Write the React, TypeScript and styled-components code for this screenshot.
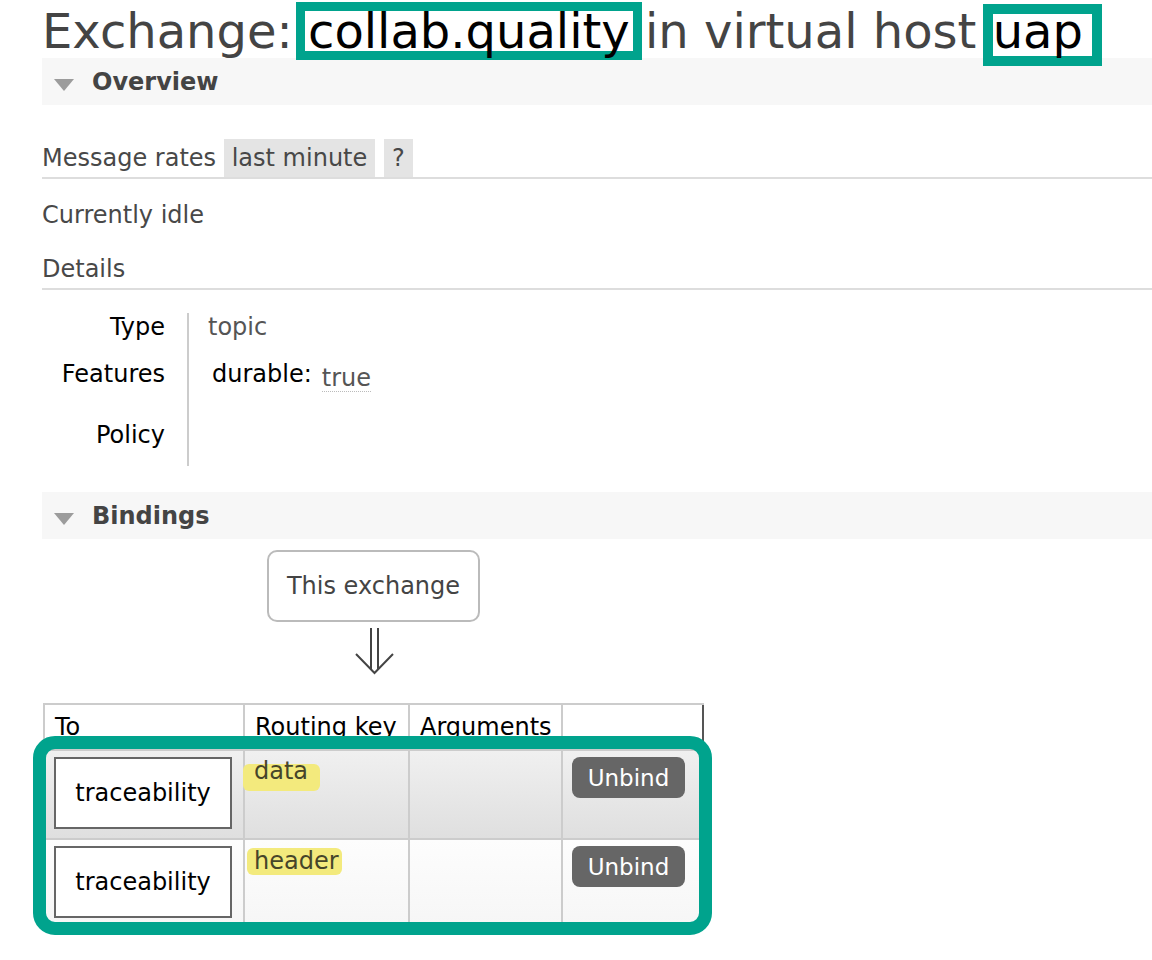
import React from "react";
import styled, { createGlobalStyle } from "styled-components";

const TEAL = "#00a38d";

const GlobalStyle = createGlobalStyle`
  html, body { margin: 0; padding: 0; background: #fff; }
  body {
    font-family: "DejaVu Sans", Verdana, sans-serif;
    font-size: 24px;
    color: #484848;
    overflow: hidden;
  }
`;

const Page = styled.div`
  width: 1152px;
  height: 960px;
  overflow: hidden;
  padding-left: 42px;
  box-sizing: border-box;
`;

const Title = styled.h1`
  margin: 0;
  padding-top: 5px;
  font-size: 48px;
  line-height: 52px;
  font-weight: normal;
  color: #444;
  white-space: nowrap;
`;

const Callout = styled.span<{ $bw: number; $lh: number; $pad: string; $ml: number; $mr: number }>`
  display: inline-block;
  border: ${(p) => p.$bw}px solid ${TEAL};
  background: #fff;
  color: #000;
  line-height: ${(p) => p.$lh}px;
  padding: ${(p) => p.$pad};
  margin: -8px ${(p) => p.$mr}px -8px ${(p) => p.$ml}px;
`;

const SectionHeader = styled.h2<{ $mt: number }>`
  margin: ${(p) => p.$mt}px 0 0;
  height: 47px;
  display: flex;
  align-items: center;
  padding-left: 12px;
  background: #f7f7f7;
  font-size: 24px;
  font-weight: bold;
  color: #444;
`;

const Triangle = styled.span`
  width: 0;
  height: 0;
  border-left: 10.5px solid transparent;
  border-right: 10.5px solid transparent;
  border-top: 12px solid #9c9c9c;
  margin: 6px 18px 0 0;
`;

const SubHeading = styled.h3<{ $mt: number }>`
  margin: ${(p) => p.$mt}px 0 0;
  font-size: 24px;
  font-weight: normal;
  line-height: 38px;
  color: #484848;
  border-bottom: 2px solid #ddd;
  white-space: nowrap;
`;

const Pill = styled.span<{ $ml?: number }>`
  display: inline-block;
  background: #e4e4e4;
  padding: 0 8px;
  margin-left: ${(p) => p.$ml ?? 0}px;
`;

const Idle = styled.p`
  margin: 17px 0 0;
  line-height: 38px;
  color: #484848;
`;

const Facts = styled.div`
  margin-top: 23px;
  display: grid;
  grid-template-columns: 145px auto;
  grid-template-rows: 47px 61px 45px;
  line-height: 28px;
`;

const FactLabel = styled.div`
  text-align: right;
  padding-right: 22px;
  color: #000;
`;

const FactValue = styled.div`
  border-left: 2px solid #ccc;
  padding-left: 19px;
  color: #555;
`;

const FeatureRow = styled.div`
  padding-left: 4px;
  color: #000;
`;

const Dotted = styled.span`
  display: inline-block;
  margin-left: 10px;
  vertical-align: -4px;
  color: #555;
  border-bottom: 1px dotted #bbb;
  line-height: 26px;
`;

const BindingsWrap = styled.div`
  display: inline-flex;
  flex-direction: column;
  align-items: center;
  margin-left: 1px;
`;

const ThisExchange = styled.div`
  margin-top: 11px;
  border: 2px solid #bbb;
  border-radius: 10px;
  padding: 0 18px;
  line-height: 68px;
  color: #444;
  white-space: nowrap;
`;

const ArrowSvg = styled.svg`
  display: block;
  margin-top: 4px;
`;

const TableWrap = styled.div`
  position: relative;
  margin-top: 27px;
`;

const Table = styled.table`
  border-collapse: separate;
  border-spacing: 0;
  table-layout: fixed;
  width: 661px;
  border-top: 2px solid #ccc;
  border-left: 2px solid #ccc;
`;

const Th = styled.th<{ $w: number; $last?: boolean }>`
  width: ${(p) => p.$w}px;
  box-sizing: border-box;
  height: 46px;
  padding: 0 0 0 10px;
  text-align: left;
  font-weight: normal;
  color: #000;
  white-space: nowrap;
  overflow: hidden;
  border-right: 2px solid ${(p) => (p.$last ? "#555" : "#ccc")};
  border-bottom: 2px solid #ccc;
`;

const Td = styled.td<{ $bg: string; $pad: string }>`
  height: 89px;
  box-sizing: border-box;
  vertical-align: top;
  padding: ${(p) => p.$pad};
  background: ${(p) => p.$bg};
  border-right: 2px solid #ccc;
  border-bottom: 2px solid #ccc;
`;

const QueueBox = styled.div`
  width: 178px;
  height: 72px;
  box-sizing: border-box;
  border: 2px solid #666;
  background: #fff;
  color: #000;
  line-height: 68px;
  text-align: center;
`;

const Marker = styled.span<{ $mt: number; $ml: number; $lh: number; $pad: string }>`
  display: inline-block;
  margin: ${(p) => p.$mt}px 0 0 ${(p) => p.$ml}px;
  line-height: ${(p) => p.$lh}px;
  padding: ${(p) => p.$pad};
  background: #f3ea7d;
  border-radius: 6px;
  color: #46452a;
  vertical-align: top;
`;

const UnbindButton = styled.button`
  width: 113px;
  height: 41px;
  border: none;
  border-radius: 8px;
  background: #666;
  color: #fff;
  font-family: "DejaVu Sans", Verdana, sans-serif;
  font-size: 23px;
  padding: 0;
  cursor: pointer;
`;

const Highlight = styled.div`
  position: absolute;
  left: -10px;
  top: 33px;
  width: 679px;
  height: 199px;
  box-sizing: border-box;
  border: 13px solid ${TEAL};
  border-radius: 22px;
  pointer-events: none;
`;

const rows = [
  {
    key: "data",
    bg: "linear-gradient(#f0f0f0, #dfdfdf)",
    mt: 13,
    ml: -2,
    lh: 15,
    pad: "0 12px 12px 11px",
  },
  {
    key: "header",
    bg: "linear-gradient(#fdfdfd, #f6f6f6)",
    mt: 8,
    ml: 2,
    lh: 27,
    pad: "0 3px 0 7px",
  },
];

export default function App() {
  return (
    <>
      <GlobalStyle />
      <Page>
        <Title>
          Exchange:{" "}
          <Callout $bw={9} $lh={40} $pad="0 3px" $ml={-12} $mr={-12}>
            collab.quality
          </Callout>{" "}
          in virtual host{" "}
          <Callout $bw={10} $lh={35} $pad="0 9px 7px 0" $ml={-9} $mr={0}>
            uap
          </Callout>
        </Title>

        <SectionHeader $mt={0}>
          <Triangle />
          Overview
        </SectionHeader>

        <SubHeading $mt={34}>
          Message rates <Pill>last minute</Pill> <Pill $ml={1}>?</Pill>
        </SubHeading>
        <Idle>Currently idle</Idle>
        <SubHeading $mt={16}>Details</SubHeading>

        <Facts>
          <FactLabel>Type</FactLabel>
          <FactValue>topic</FactValue>
          <FactLabel>Features</FactLabel>
          <FactValue>
            <FeatureRow>
              durable:<Dotted>true</Dotted>
            </FeatureRow>
          </FactValue>
          <FactLabel>Policy</FactLabel>
          <FactValue />
        </Facts>

        <SectionHeader $mt={26}>
          <Triangle />
          Bindings
        </SectionHeader>

        <BindingsWrap>
          <ThisExchange>This exchange</ThisExchange>
          <ArrowSvg width="40" height="50" viewBox="0 0 40 50">
            <g fill="none" stroke="#444" strokeWidth="2" strokeLinecap="butt">
              <line x1="17" y1="2" x2="17" y2="43.5" />
              <line x1="24" y1="2" x2="24" y2="43.5" />
              <polyline points="2,28 20.5,47 39,28" strokeLinejoin="miter" />
            </g>
          </ArrowSvg>
          <TableWrap>
            <Table>
              <thead>
                <tr>
                  <Th $w={200}>To</Th>
                  <Th $w={165}>Routing key</Th>
                  <Th $w={153}>Arguments</Th>
                  <Th $w={141} $last />
                </tr>
              </thead>
              <tbody>
                {rows.map((r) => (
                  <tr key={r.key}>
                    <Td $bg={r.bg} $pad="6px 0 0 9px">
                      <QueueBox>traceability</QueueBox>
                    </Td>
                    <Td $bg={r.bg} $pad="0">
                      <Marker $mt={r.mt} $ml={r.ml} $lh={r.lh} $pad={r.pad}>
                        {r.key}
                      </Marker>
                    </Td>
                    <Td $bg={r.bg} $pad="0" />
                    <Td $bg={r.bg} $pad="6px 0 0 9px">
                      <UnbindButton>Unbind</UnbindButton>
                    </Td>
                  </tr>
                ))}
              </tbody>
            </Table>
            <Highlight />
          </TableWrap>
        </BindingsWrap>
      </Page>
    </>
  );
}
